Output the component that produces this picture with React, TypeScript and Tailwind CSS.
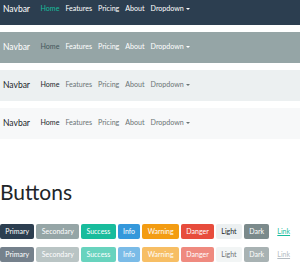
const navItems = ['Features', 'Pricing', 'About'];

type NavTheme = {
    bg: string;
    brand: string;
    active: string;
    link: string;
};

const navThemes: NavTheme[] = [
    { bg: 'bg-[#2c3e50]', brand: 'text-white', active: 'text-[#18bc9c]', link: 'text-white' },
    { bg: 'bg-[#95a5a6]', brand: 'text-white', active: 'text-[#44555a]', link: 'text-white' },
    { bg: 'bg-[#ecf0f1]', brand: 'text-[#212529]', active: 'text-[#212529]', link: 'text-[#6b7475]' },
    { bg: 'bg-[#f7f8f9]', brand: 'text-[#212529]', active: 'text-[#212529]', link: 'text-[#6b7475]' },
];

const buttons = [
    { label: 'Primary', cls: 'bg-[#2c3e50] text-white' },
    { label: 'Secondary', cls: 'bg-[#95a5a6] text-white' },
    { label: 'Success', cls: 'bg-[#18bc9c] text-white' },
    { label: 'Info', cls: 'bg-[#3498db] text-white' },
    { label: 'Warning', cls: 'bg-[#f39c12] text-white' },
    { label: 'Danger', cls: 'bg-[#e74c3c] text-white' },
    { label: 'Light', cls: 'bg-[#ecf0f1] text-[#212529]' },
    { label: 'Dark', cls: 'bg-[#7b8a8b] text-white' },
];

function Navbar({ theme }: { theme: NavTheme }) {
    return (
        <nav className={'flex h-[31px] items-center pl-[3px] ' + theme.bg}>
            <span className={'mr-[10.5px] text-[8.5px] ' + theme.brand}>Navbar</span>
            <ul className="flex items-center gap-[6px] text-[7.1px]">
                <li className={theme.active}>Home</li>
                {navItems.map((item) => (
                    <li key={item} className={theme.link}>
                        {item}
                    </li>
                ))}
                <li className={'flex items-center ' + theme.link}>
                    Dropdown
                    <span className="ml-[2px] inline-block h-0 w-0 border-x-[2px] border-t-[2.5px] border-x-transparent border-t-current" />
                </li>
            </ul>
        </nav>
    );
}

function ButtonRow({ disabled }: { disabled?: boolean }) {
    return (
        <div className="flex items-center gap-[2px]">
            {buttons.map((b) => (
                <span
                    key={b.label}
                    className={
                        'flex h-[15px] items-center rounded-[2px] px-[5.3px] text-[7px] ' +
                        b.cls +
                        (disabled ? ' opacity-65' : '')
                    }
                >
                    {b.label}
                </span>
            ))}
            <span
                className={
                    'ml-[6px] text-[7px] underline ' +
                    (disabled ? 'text-[#b4bcc2]' : 'text-[#18bc9c]')
                }
            >
                Link
            </span>
        </div>
    );
}

export default function App() {
    return (
        <div className="h-[266px] w-[300px] overflow-hidden bg-white font-[Lato,'Liberation_Sans',sans-serif]">
            <div className="-mt-[6px] flex flex-col gap-[7px]">
                {navThemes.map((t, i) => (
                    <Navbar key={i} theme={t} />
                ))}
            </div>

            <h1 className="mt-[41px] text-[21px] leading-[24px] text-[#212529]">Buttons</h1>

            <div className="mt-[20px] flex flex-col gap-[8px]">
                <ButtonRow />
                <ButtonRow disabled />
            </div>
        </div>
    );
}
